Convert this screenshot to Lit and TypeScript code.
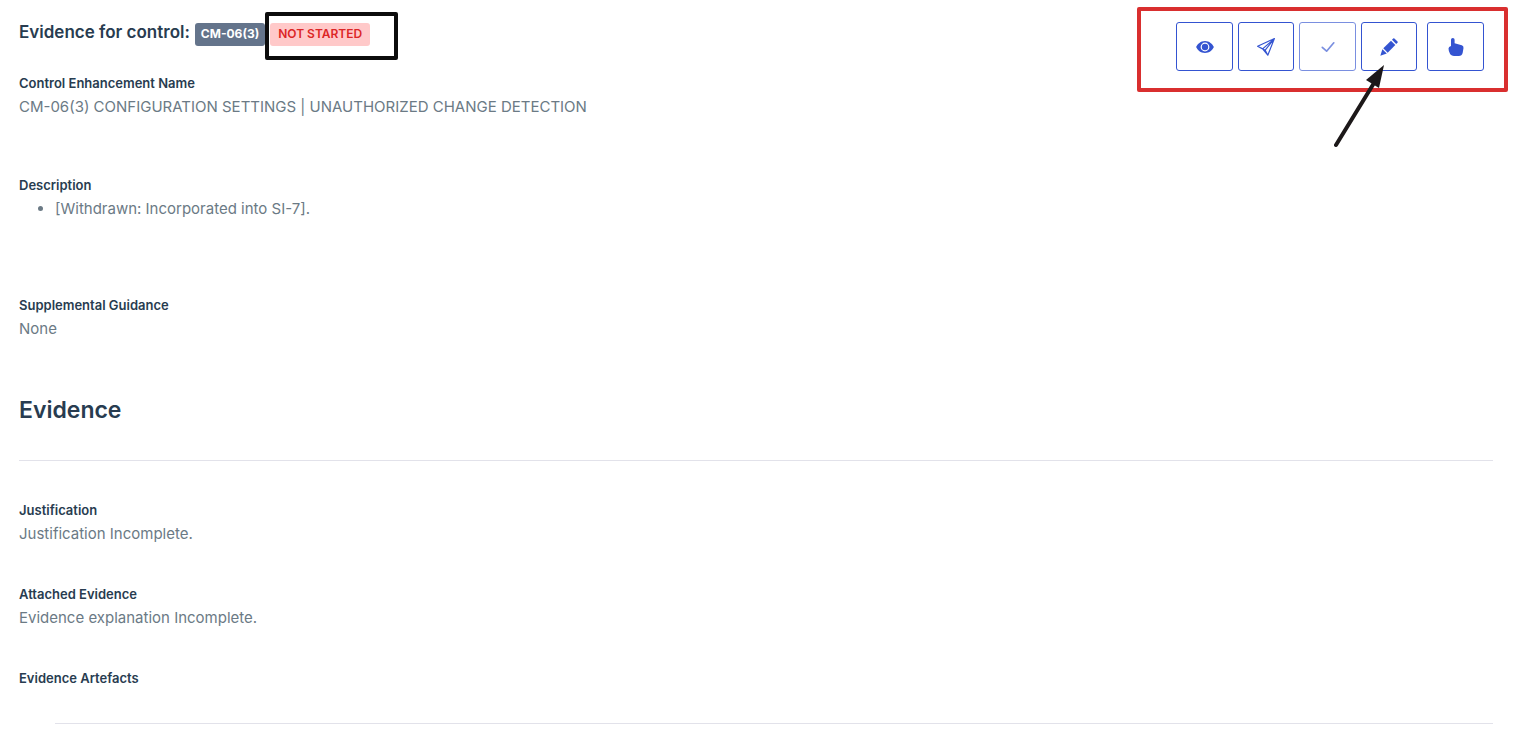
import { LitElement, html, css, svg } from "lit";
import { customElement, property } from "lit/decorators.js";

const icons: Record<string, unknown> = {
  eye: svg`<path fill="currentColor" fill-rule="evenodd" d="M9 3C13.300 3 16.500 6 17.900 9C16.500 12 13.300 15 9 15C4.700 15 1.500 12 0.100 9C1.500 6 4.700 3 9 3ZM9 4.600A4.400 4.400 0 1 0 9 13.400A4.400 4.400 0 1 0 9 4.600Z"/><circle cx="9" cy="9" r="3.200" fill="currentColor"/>`,
  send: svg`<path fill="none" stroke="currentColor" stroke-width="1.200" stroke-linejoin="round" d="M17.400 0.600L0.600 8.200L5.600 10.900L17.400 0.600L10.800 17.200L8.200 12.200L17.400 0.600M5.600 10.900L10.800 17.200M5.600 10.900L8.200 12.200"/>`,
  check: svg`<path fill="none" stroke="currentColor" stroke-width="1.700" stroke-linecap="round" stroke-linejoin="round" d="M3.300 9.300L7.600 13.200L14.800 4.800"/>`,
  pencil: svg`<g fill="currentColor"><path d="M0.300 17.700L2.400 11.200L6.800 15.600Z"/><path d="M3.300 10.300L11 2.700L15.300 7L7.700 14.700Z"/><path d="M12 1.800L13.200 0.500Q13.800 0 14.400 0.500L17.500 3.600Q18 4.200 17.500 4.800L16.200 6Z"/></g>`,
  hand: svg`<path fill="currentColor" d="M4 1.800A1.800 1.800 0 0 1 7.600 1.800V5.200L14.800 7.200Q16.700 7.900 16.500 10L15.700 14.800Q14.900 18 11.800 18H7Q4.700 18 3.200 16.200Q1.500 13.700 1.500 10.600Q1.500 8.600 4 8Z"/>`,
};

@customElement("control-field")
export class ControlField extends LitElement {
  @property() label = "";

  static styles = css`
    :host {
      display: block;
      font-size: 15px;
      line-height: 24px;
      color: #6b7a85;
    }
    .label {
      margin: 0;
      font-size: 13px;
      font-weight: 600;
      line-height: 24px;
      color: #283c50;
    }
  `;

  render() {
    return html`<h3 class="label">${this.label}</h3><slot></slot>`;
  }
}

@customElement("app-root")
export class AppRoot extends LitElement {
  static styles = css`
    :host {
      display: block;
      font-family: Inter, sans-serif;
      background: #fff;
      color: #283c50;
    }
    .page {
      padding: 22px 23px 19px 19px;
    }
    .header {
      display: flex;
      justify-content: space-between;
      align-items: flex-start;
    }
    .heading {
      display: flex;
      align-items: flex-start;
      gap: 5px;
      padding-top: 1px;
    }
    .title {
      margin: 0;
      font-size: 17px;
      font-weight: 600;
      line-height: 19px;
    }
    .badge {
      display: block;
      padding: 0 6px 1px;
      border-radius: 3px;
      font-size: 12px;
      font-weight: 700;
      line-height: 22px;
      color: #fff;
      background: #64748b;
    }
    .badge.status {
      padding: 0 8px 1px;
      font-weight: 600;
      color: #dc2626;
      background: #ffc9c9;
    }
    .marked {
      position: relative;
    }
    .frame {
      position: absolute;
      box-sizing: border-box;
      border: 4px solid #0c0c0c;
      border-radius: 2px;
      pointer-events: none;
    }
    .frame.black {
      inset: -11px -28px -14px -5px;
    }
    .frame.red {
      inset: -15px -24px -21px -39px;
      border-color: #d92f2f;
    }
    .actions {
      display: flex;
      gap: 5px;
      margin-right: 9px;
    }
    .action {
      display: flex;
      align-items: center;
      justify-content: center;
      box-sizing: border-box;
      width: 57px;
      height: 49px;
      padding: 0;
      border: 1px solid #3454d1;
      border-radius: 3px;
      background: #fff;
      color: #3454d1;
    }
    .action:disabled {
      opacity: 0.65;
    }
    .action.narrow {
      width: 56px;
    }
    .action.apart {
      margin-left: 5px;
    }
    .icon {
      display: block;
      width: 18px;
      height: 18px;
    }
    .arrow {
      position: absolute;
      top: 43px;
      right: 98px;
      width: 52px;
      height: 84px;
      pointer-events: none;
    }
    .text {
      margin: 0;
    }
    .list {
      margin: 0;
      padding-left: 36px;
    }
    .fields {
      display: flex;
      flex-direction: column;
    }
    .spaced {
      margin-bottom: 54px;
    }
    .roomy {
      margin-bottom: 72px;
    }
    .section {
      margin: 55px 0 35px;
      font-size: 23px;
      font-weight: 600;
      line-height: 29px;
    }
    .rule {
      margin: 0;
      border: 0;
      border-top: 1px solid #e2e2ea;
    }
    .evidence {
      display: flex;
      flex-direction: column;
      gap: 36px;
      padding: 37px 0 33px;
    }
    .rule.inner {
      margin-left: 36px;
    }
  `;

  private action(name: string, label: string, variant = "", disabled = false) {
    return html`<button
      class="action ${variant}"
      type="button"
      aria-label=${label}
      ?disabled=${disabled}
    >
      <svg class="icon" viewBox="0 0 18 18" aria-hidden="true">${icons[name]}</svg>
    </button>`;
  }

  render() {
    return html`
      <main class="page">
        <header class="header">
          <div class="heading">
            <h1 class="title">Evidence for control:</h1>
            <span class="badge">CM-06(3)</span>
            <div class="marked">
              <span class="badge status">NOT STARTED</span>
              <div class="frame black"></div>
            </div>
          </div>
          <div class="actions marked">
            ${this.action("eye", "View")}
            ${this.action("send", "Submit", "narrow")}
            ${this.action("check", "Approve", "", true)}
            ${this.action("pencil", "Edit", "narrow")}
            ${this.action("hand", "Assign", "apart")}
            <div class="frame red"></div>
            <svg class="arrow" viewBox="0 0 52 84" aria-hidden="true">
              <path d="M2 80L40 18" fill="none" stroke="#1c1819" stroke-width="4" stroke-linecap="round" />
              <path d="M50 0L32 15L45 23Z" fill="#1c1819" />
            </svg>
          </div>
        </header>
        <div class="fields">
          <control-field class="spaced" label="Control Enhancement Name">
            <p class="text">CM-06(3) CONFIGURATION SETTINGS | UNAUTHORIZED CHANGE DETECTION</p>
          </control-field>
          <control-field class="roomy" label="Description">
            <ul class="list">
              <li>[Withdrawn: Incorporated into SI-7].</li>
            </ul>
          </control-field>
          <control-field label="Supplemental Guidance">
            <p class="text">None</p>
          </control-field>
        </div>
        <h2 class="section">Evidence</h2>
        <hr class="rule" />
        <div class="evidence">
          <control-field label="Justification">
            <p class="text">Justification Incomplete.</p>
          </control-field>
          <control-field label="Attached Evidence">
            <p class="text">Evidence explanation Incomplete.</p>
          </control-field>
          <control-field label="Evidence Artefacts"></control-field>
        </div>
        <hr class="rule inner" />
      </main>
    `;
  }
}
